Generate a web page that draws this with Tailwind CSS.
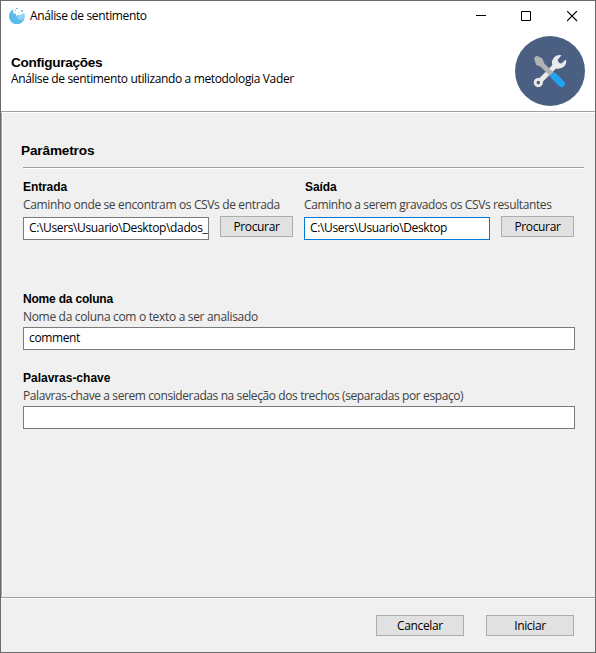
<!DOCTYPE html>
<html lang="pt-BR">
<head>
<meta charset="utf-8">
<title>Análise de sentimento</title>
<script src="https://cdn.jsdelivr.net/npm/@tailwindcss/browser@4"></script>
</head>
<body class="w-[596px] h-[653px] overflow-hidden">
<div class="w-[596px] h-[653px] border border-[#6b6b6d] bg-[#f0f0f0] flex flex-col font-['Open_Sans','Noto_Sans',sans-serif] text-[12px] tracking-[-0.36px] leading-[16px] text-black whitespace-nowrap">
  <header class="h-[110px] shrink-0 bg-white flex flex-col">
    <div class="h-[30px] flex items-center pl-[8px]">
      <svg class="w-4 h-4 shrink-0" viewBox="0 0 16 16">
        <path d="M5 1Q0 3 0 8.300A7.700 7.700 0 0 0 15.700 8.500L11 7.500 9 7 7.500 8 6.500 5.500 4.500 5.500 4 3Z" fill="#5bbcec"/>
        <path d="M8.500 10.500Q7.500 7.500 10 7Q12 7.500 13 5.500L15.500 5.500Q16.500 9 14 11.500 10.500 12.800 8.500 10.500Z" fill="#91d5f5"/>
        <path d="M7 0h2v1H7zM6 2h1v1h-1zM12 2h2v2h-2zM9 4h1v1H9z" fill="#79caef"/>
      </svg>
      <span class="ml-[5px]">Análise de sentimento</span>
      <div class="ml-auto mr-[17px] flex gap-[35px]">
        <svg class="w-[11px] h-[11px]" viewBox="0 0 11 11"><path d="M1 4.500H11" stroke="#000"/></svg>
        <svg class="w-[11px] h-[11px]" viewBox="0 0 11 11"><path d="M.5.5h9v9h-9z" fill="none" stroke="#000"/></svg>
        <svg class="w-[11px] h-[11px]" viewBox="0 0 11 11"><path d="M0 0l10 10M10 0l-10 10" stroke="#000" stroke-width="1.100"/></svg>
      </div>
    </div>
    <div class="flex justify-between pl-[10px] pr-[10px] pt-[5px]">
      <div class="pt-[18px]">
        <h1 class="font-['Liberation_Sans',sans-serif] font-bold text-[13.6px] tracking-[-0.3px] leading-[18px]">Configurações</h1>
        <p class="-mt-px">Análise de sentimento utilizando a metodologia Vader</p>
      </div>
      <svg class="w-[70px] h-[70px]" viewBox="0 0 70 70">
        <circle cx="35" cy="35" r="35" fill="#4b5f82"/>
        <path d="M25 45L42 28" stroke="#ebebeb" stroke-width="5"/>
        <circle cx="23.300" cy="46.600" r="3.200" fill="none" stroke="#ebebeb" stroke-width="2.800"/>
        <path d="M46.500 19.300Q41.500 18.300 38.500 22.300 36 25.500 37.500 29.500L40.500 32.500Q45 33.700 48.700 30.700 52 27.800 50.900 23.500L46.500 27.500Q43.100 27.100 42.700 23.700Z" fill="#ebebeb"/>
        <path d="M19 22L21.500 19.800 27.300 22.300 29.300 27.500 38.500 36.500 35 40 26 31 21 28.800Z" fill="#b3b3b3"/>
        <path d="M39 40.200L46.500 47.600" stroke="#22a3f2" stroke-width="6.800" stroke-linecap="round"/>
      </svg>
    </div>
  </header>
  <div class="h-[2px] shrink-0 bg-[#a0a0a0] border-b border-white"></div>
  <main class="h-[484px] shrink-0 border-l border-[#a0a0a0]">
    <div class="h-full border-l border-white pl-[20px]">
      <h2 class="pt-[29px] -ml-[2px] font-['Liberation_Sans',sans-serif] font-bold text-[13.6px] tracking-[-0.15px] leading-[18px]">Parâmetros</h2>
      <div class="mt-[7px] w-[561px] h-[2px] bg-[#a0a0a0] border-b border-white"></div>
      <div class="mt-[10px] flex">
        <section class="w-[281px]">
          <h3 class="font-['Liberation_Sans',sans-serif] font-bold text-[12px] tracking-[-0.1px]">Entrada</h3>
          <p class="mt-[2px] text-[#404040]">Caminho onde se encontram os CSVs de entrada</p>
          <div class="mt-[3px] flex items-start">
            <div class="mt-[1px] w-[186px] h-[23px] border border-[#7a7a7a] bg-white pl-[5px] py-[2px]">C:\Users\Usuario\Desktop\dados_</div>
            <button class="ml-[11px] w-[73px] h-[21px] border border-[#adadad] bg-[#e1e1e1] leading-[19px]">Procurar</button>
          </div>
        </section>
        <section class="w-[281px]">
          <h3 class="ml-px font-['Liberation_Sans',sans-serif] font-bold text-[12px] tracking-[-0.1px]">Saída</h3>
          <p class="mt-[2px] text-[#404040] tracking-[-0.39px]">Caminho a serem gravados os CSVs resultantes</p>
          <div class="mt-[3px] flex items-start">
            <div class="mt-[1px] w-[186px] h-[23px] border border-[#0078d7] bg-white pl-[5px] py-[2px]">C:\Users\Usuario\Desktop</div>
            <button class="ml-[11px] w-[73px] h-[21px] border border-[#adadad] bg-[#e1e1e1] leading-[19px]">Procurar</button>
          </div>
        </section>
      </div>
      <section class="mt-[51px]">
        <h3 class="font-['Liberation_Sans',sans-serif] font-bold text-[12px] tracking-[-0.2px]">Nome da coluna</h3>
        <p class="mt-[2px] text-[#404040] tracking-[-0.32px]">Nome da coluna com o texto a ser analisado</p>
        <div class="mt-[2px] w-[552px] h-[23px] border border-[#7a7a7a] bg-white px-[5px] py-[2px]">comment</div>
      </section>
      <section class="mt-[20px]">
        <h3 class="font-['Liberation_Sans',sans-serif] font-bold text-[12px] tracking-[0px]">Palavras-chave</h3>
        <p class="mt-[2px] text-[#404040] tracking-[-0.4px]">Palavras-chave a serem consideradas na seleção dos trechos (separadas por espaço)</p>
        <div class="mt-[2px] w-[552px] h-[23px] border border-[#7a7a7a] bg-white"></div>
      </section>
    </div>
  </main>
  <div class="h-[2px] shrink-0 bg-[#a0a0a0] border-b border-white"></div>
  <footer class="flex justify-end gap-[22px] pt-[16px] pr-[21px]">
    <button class="w-[88px] h-[21px] border border-[#adadad] bg-[#e1e1e1] leading-[19px]">Cancelar</button>
    <button class="w-[88px] h-[21px] border border-[#adadad] bg-[#e1e1e1] leading-[19px]">Iniciar</button>
  </footer>
</div>
</body>
</html>
